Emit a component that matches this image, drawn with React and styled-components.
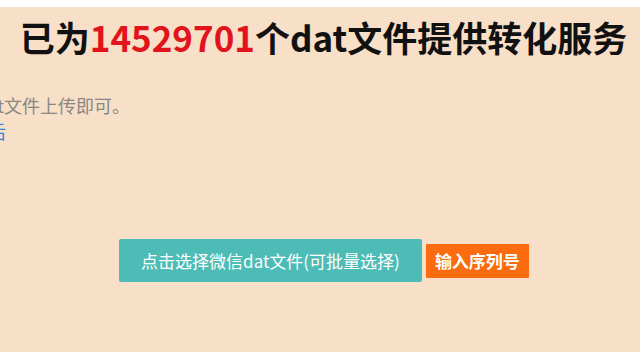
import React from "react";
import styled, { createGlobalStyle } from "styled-components";

const Global = createGlobalStyle`
  html, body { margin: 0; padding: 0; }
  body {
    background: #f7dfc8;
    font-family: "Microsoft YaHei", "Noto Sans CJK SC", "Noto Sans", sans-serif;
    overflow: hidden;
  }
`;

const Page = styled.div`
  width: 640px;
  height: 352px;
  display: flex;
  flex-direction: column;
  background: #f7dfc8;
`;

const TopStrip = styled.div`
  height: 7px;
  background: #ffffff;
  flex-shrink: 0;
`;

const Title = styled.h1`
  margin: 6px 0 0 0;
  padding-left: 7px;
  text-align: center;
  font-size: 35px;
  line-height: 48px;
  font-weight: 700;
  color: #111;
  white-space: nowrap;
`;

const Count = styled.span`
  color: #e2141b;
`;

const Info = styled.div`
  margin-top: 31px;
  display: flex;
  flex-direction: column;
  align-items: flex-start;
`;

const Line = styled.div`
  width: ${(p) => p.$w}px;
  display: flex;
  justify-content: flex-end;
  white-space: nowrap;
  font-size: 18px;
  line-height: 26px;
  color: ${(p) => (p.$link ? "#2f86dc" : "#8a8784")};
`;

const Actions = styled.div`
  margin-top: 95px;
  padding-left: 8px;
  display: flex;
  justify-content: center;
  align-items: center;
  gap: 4px;
`;

const SelectButton = styled.button`
  height: 43px;
  padding: 0 22px;
  border: none;
  border-radius: 2px;
  background: #4dbcb6;
  color: #fff;
  font-family: inherit;
  font-size: 17px;
  white-space: nowrap;
`;

const SerialButton = styled.button`
  height: 34px;
  padding: 0 9px;
  border: none;
  border-radius: 1px;
  background: #fb6b10;
  color: #fff;
  font-family: inherit;
  font-size: 17px;
  font-weight: 700;
  white-space: nowrap;
`;

export default function App() {
  return (
    <>
      <Global />
      <Page>
        <TopStrip />
        <Title>
          已为<Count>14529701</Count>个dat文件提供转化服务
        </Title>
        <Info>
          <Line $w={130}>
            <span>请直接选择电脑中的微信dat文件上传即可。</span>
          </Line>
          <Line $w={6} $link>
            <span>查看使用说明及转换后</span>
          </Line>
        </Info>
        <Actions>
          <SelectButton>点击选择微信dat文件(可批量选择)</SelectButton>
          <SerialButton>输入序列号</SerialButton>
        </Actions>
      </Page>
    </>
  );
}
